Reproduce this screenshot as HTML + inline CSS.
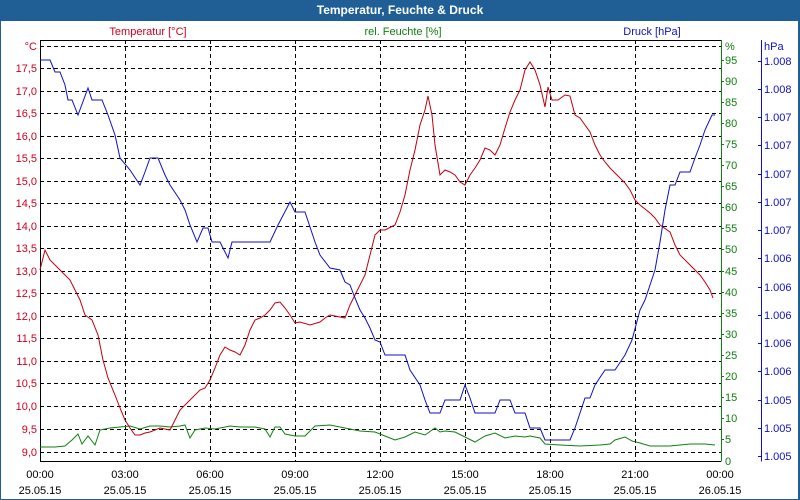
<!DOCTYPE html><html><head><style>body{margin:0;width:800px;height:500px;overflow:hidden;background:#fff}svg{display:block;font-family:"Liberation Sans",sans-serif;font-size:11px}</style></head><body>
<svg width="800" height="500" viewBox="0 0 800 500">
<rect x="0" y="0" width="800" height="500" fill="#1f5f96"/>
<rect x="1" y="21" width="797" height="478" fill="#fff"/>
<text x="400" y="14" fill="#fff" font-weight="bold" text-anchor="middle" font-size="12">Temperatur, Feuchte &amp; Druck</text>
<text x="148" y="35" fill="#d00020" text-anchor="middle">Temperatur [°C]</text>
<text x="403" y="35" fill="#108010" text-anchor="middle">rel. Feuchte [%]</text>
<text x="652" y="35" fill="#1010c0" text-anchor="middle">Druck [hPa]</text>
<g stroke="#000" stroke-dasharray="4,3" stroke-width="1">
<path d="M40 46.5H721M40 68.5H721M40 91.5H721M40 113.5H721M40 136.5H721M40 158.5H721M40 181.5H721M40 203.5H721M40 226.5H721M40 248.5H721M40 271.5H721M40 293.5H721M40 316.5H721M40 338.5H721M40 361.5H721M40 383.5H721M40 406.5H721M40 429.5H721M40 452.5H721"/>
<path d="M125.5 40V461M210.5 40V461M295.5 40V461M380.5 40V461M465.5 40V461M550.5 40V461M635.5 40V461"/>
</g>
<path d="M40.5 40.5H721" stroke="#000"/>
<path d="M40.5 40V461.5H721" stroke="#000" fill="none"/>
<path d="M721.5 40V461.5" stroke="#108010"/>
<path d="M761.5 40V461.5" stroke="#1010c0"/>
<g fill="#d00020" text-anchor="end">
<text x="37" y="50">°C</text><text x="37" y="72">17,5</text><text x="37" y="95">17,0</text><text x="37" y="117">16,5</text><text x="37" y="140">16,0</text><text x="37" y="162">15,5</text><text x="37" y="185">15,0</text><text x="37" y="207">14,5</text><text x="37" y="230">14,0</text><text x="37" y="252">13,5</text><text x="37" y="275">13,0</text><text x="37" y="297">12,5</text><text x="37" y="320">12,0</text><text x="37" y="342">11,5</text><text x="37" y="365">11,0</text><text x="37" y="387">10,5</text><text x="37" y="410">10,0</text><text x="37" y="433">9,5</text><text x="37" y="456">9,0</text>
</g>
<g fill="#108010">
<text x="725" y="50">%</text><text x="725" y="64">95</text><text x="725" y="85">90</text><text x="725" y="106">85</text><text x="725" y="127">80</text><text x="725" y="148">75</text><text x="725" y="169">70</text><text x="725" y="190">65</text><text x="725" y="211">60</text><text x="725" y="232">55</text><text x="725" y="253">50</text><text x="725" y="275">45</text><text x="725" y="296">40</text><text x="725" y="317">35</text><text x="725" y="338">30</text><text x="725" y="359">25</text><text x="725" y="380">20</text><text x="725" y="401">15</text><text x="725" y="422">10</text><text x="725" y="443">5</text><text x="725" y="465">0</text>
</g>
<g stroke="#108010"><path d="M721 60.5h3M721 81.5h3M721 102.5h3M721 123.5h3M721 144.5h3M721 165.5h3M721 186.5h3M721 207.5h3M721 228.5h3M721 249.5h3M721 271.5h3M721 292.5h3M721 313.5h3M721 334.5h3M721 355.5h3M721 376.5h3M721 397.5h3M721 418.5h3M721 439.5h3"/></g>
<g fill="#1010c0">
<text x="764" y="50">hPa</text><text x="764" y="65">1.008</text><text x="764" y="93">1.008</text><text x="764" y="121">1.007</text><text x="764" y="149">1.007</text><text x="764" y="178">1.007</text><text x="764" y="206">1.007</text><text x="764" y="234">1.007</text><text x="764" y="262">1.006</text><text x="764" y="291">1.006</text><text x="764" y="319">1.006</text><text x="764" y="347">1.006</text><text x="764" y="375">1.006</text><text x="764" y="404">1.005</text><text x="764" y="432">1.005</text><text x="764" y="460">1.005</text>
</g>
<g stroke="#1010c0"><path d="M758 61.5h3M758 89.5h3M758 117.5h3M758 145.5h3M758 174.5h3M758 202.5h3M758 230.5h3M758 258.5h3M758 287.5h3M758 315.5h3M758 343.5h3M758 371.5h3M758 400.5h3M758 428.5h3M758 456.5h3"/></g>
<g text-anchor="middle" fill="#000">
<text x="40" y="478">00:00</text><text x="40" y="494">25.05.15</text>
<text x="125" y="478">03:00</text><text x="125" y="494">25.05.15</text>
<text x="210" y="478">06:00</text><text x="210" y="494">25.05.15</text>
<text x="295" y="478">09:00</text><text x="295" y="494">25.05.15</text>
<text x="380" y="478">12:00</text><text x="380" y="494">25.05.15</text>
<text x="465" y="478">15:00</text><text x="465" y="494">25.05.15</text>
<text x="550" y="478">18:00</text><text x="550" y="494">25.05.15</text>
<text x="635" y="478">21:00</text><text x="635" y="494">25.05.15</text>
<text x="720" y="478">00:00</text><text x="720" y="494">26.05.15</text>
</g>
<polyline fill="none" stroke="#108010" points="40,447 55,447 65,446 72,440 78,434 82,444 88,436 95,445 100,430 110,428 120,427 130,426 140,429 150,426 160,426 170,427 180,426 185,425 190,438 195,430 205,428 215,429 230,426 240,427 255,427 265,429 270,437 275,427 280,427 285,434 295,436 305,436 315,426 330,425 345,428 360,431 375,432 385,436 395,440 405,437 415,432 425,435 435,428 440,432 445,431 455,432 465,437 475,442 485,436 495,433 505,438 515,436 525,437 530,436 540,438 545,444 560,445 580,446 600,445 610,444 615,440 625,437 632,441 640,443 650,446 670,446 690,444 705,444 715,445"/>
<polyline fill="none" stroke="#c00010" points="40,270 45,250 50,260 60,270 70,280 75,290 80,300 85,315 92,320 98,335 103,360 108,378 115,395 120,408 125,420 130,428 135,435 140,435 145,433 150,432 155,430 160,428 170,430 180,410 190,400 200,390 205,388 210,380 215,368 220,355 225,347 230,350 235,352 240,355 245,345 250,330 255,320 260,318 265,315 270,310 275,303 280,302 285,308 290,315 295,323 300,322 310,325 320,322 325,318 330,315 345,318 350,305 355,295 365,275 370,255 375,235 380,230 385,230 395,225 400,212 405,195 410,170 415,150 420,125 425,110 428,96 432,115 435,145 440,175 445,170 450,172 455,175 460,182 465,185 470,175 475,168 480,160 485,148 490,150 495,155 500,145 505,128 510,112 515,100 520,90 525,70 530,62 535,70 540,85 545,107 548,87 552,100 558,100 565,95 570,96 575,115 580,118 585,125 590,132 595,145 600,155 605,162 610,168 620,178 625,183 630,190 635,200 640,205 650,213 655,218 660,225 670,232 675,245 680,255 690,265 700,275 705,282 710,290 713,298"/>
<polyline fill="none" stroke="#1010c0" points="40,60 50,60 55,72 60,72 65,85 68,100 72,100 78,115 88,88 92,100 102,100 108,115 115,135 120,158 130,170 140,185 145,172 150,158 158,158 165,175 170,185 180,200 185,210 190,225 197,242 203,228 208,228 212,242 220,242 228,258 232,242 240,242 270,242 278,225 290,202 295,212 305,212 315,242 320,255 330,268 340,270 345,282 350,285 355,298 360,310 365,318 370,328 375,340 380,342 385,355 405,355 410,370 420,385 425,400 430,413 440,413 445,400 460,400 465,385 470,398 475,413 495,413 500,400 510,400 515,413 525,413 530,428 540,428 545,440 570,440 575,428 580,413 585,398 590,398 595,385 605,370 615,370 625,355 632,340 640,310 645,300 650,285 655,270 660,242 665,210 670,185 675,185 680,172 690,172 695,158 700,145 705,130 712,115 715,115"/>
</svg></body></html>
